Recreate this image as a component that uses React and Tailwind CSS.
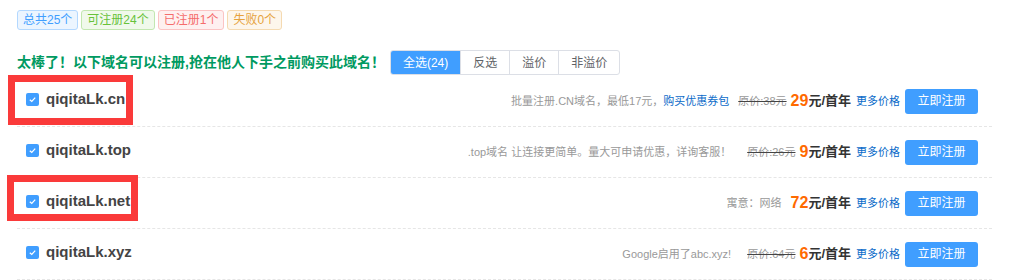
import React from "react";

const font = { fontFamily: '"Liberation Sans", "Noto Sans CJK SC", sans-serif' };

function Check() {
  return (
    <span className="flex h-[13px] w-[13px] items-center justify-center rounded-[2px] bg-[#409eff]">
      <svg width="9" height="9" viewBox="0 0 10 10">
        <path d="M2 5.2 L4.2 7.2 L8 3" stroke="#fff" strokeWidth="1.4" fill="none" />
      </svg>
    </span>
  );
}

const rows = [
  { name: "qiqitaLk.cn", desc: "批量注册.CN域名，最低17元，", link: "购买优惠券包", orig: "原价:38元", price: "29" },
  { name: "qiqitaLk.top", desc: ".top域名 让连接更简单。量大可申请优惠，详询客服！", orig: "原价:26元", price: "9" },
  { name: "qiqitaLk.net", desc: "寓意：网络", price: "72" },
  { name: "qiqitaLk.xyz", desc: "Google启用了abc.xyz!", orig: "原价:64元", price: "6" },
];

export default function App() {
  return (
    <div className="relative h-[280px] w-[1024px] overflow-hidden bg-white" style={font}>
      <div className="pl-[17px] pt-[10px]">
        <div className="flex gap-[3px] text-[12px]">
          <span className="flex h-[20px] items-center rounded-[3px] border border-[#b3d8ff] bg-[#ecf5ff] px-[5px] text-[#409eff]">总共25个</span>
          <span className="flex h-[20px] items-center rounded-[3px] border border-[#c2e7b0] bg-[#f0f9eb] px-[5px] text-[#67c23a]">可注册24个</span>
          <span className="flex h-[20px] items-center rounded-[3px] border border-[#fbc4c4] bg-[#fef0f0] px-[5px] text-[#f56c6c]">已注册1个</span>
          <span className="flex h-[20px] items-center rounded-[3px] border border-[#f5dab1] bg-[#fdf6ec] px-[5px] text-[#e6a23c]">失败0个</span>
        </div>
        <div className="mt-[20px] flex h-[25px] items-center">
          <span className="text-[14px] font-bold text-[#009a61]">太棒了！以下域名可以注册,抢在他人下手之前购买此域名！</span>
          <div className="ml-[5px] flex h-[25px] overflow-hidden rounded-[3px] border border-[#dcdfe6] text-[12px]">
            <span className="flex items-center bg-[#409eff] px-3 text-white">全选(24)</span>
            <span className="flex items-center border-l border-[#dcdfe6] px-3 text-[#606266]">反选</span>
            <span className="flex items-center border-l border-[#dcdfe6] px-3 text-[#606266]">溢价</span>
            <span className="flex items-center border-l border-[#dcdfe6] px-3 text-[#606266]">非溢价</span>
          </div>
        </div>
        <div className="mt-[1px] w-[975px]">
          {rows.map((r) => (
            <div key={r.name} className="flex h-[51px] items-center border-b border-dashed border-[#e6e6e6] pl-[9px] pr-[14px]">
              <div className="mb-[4px] flex items-center">
                <Check />
                <span className="ml-[7px] text-[15px] font-bold text-[#444]">{r.name}</span>
              </div>
              <div className="ml-auto flex items-center text-[11px]">
                <span className="text-[#999]">{r.desc}</span>
                {r.link && <span className="text-[#0b6bc9]">{r.link}</span>}
                {r.orig ? (
                  <span className={(r.link ? "ml-[9px]" : "ml-[16px]") + " text-[#999] line-through decoration-[#444]"}>{r.orig}</span>
                ) : (
                  <span className="w-[5px]"></span>
                )}
                <span className="ml-[4px] text-[16px] font-bold text-[#ff6a00]">{r.price}</span>
                <span className="text-[13px] font-bold text-[#333]">元/首年</span>
                <span className="ml-[5px] text-[#0b6bc9]">更多价格</span>
                <span className="ml-[5px] flex h-[25px] w-[73px] items-center justify-center rounded-[3px] bg-[#409eff] text-[12px] text-white">立即注册</span>
              </div>
            </div>
          ))}
        </div>
      </div>
      <div className="absolute left-[8px] top-[75px] h-[50px] w-[125px] border-[7px] border-[#fa3a3a]"></div>
      <div className="absolute left-[7px] top-[175px] h-[46px] w-[131px] border-[7px] border-[#fa3a3a]"></div>
    </div>
  );
}
